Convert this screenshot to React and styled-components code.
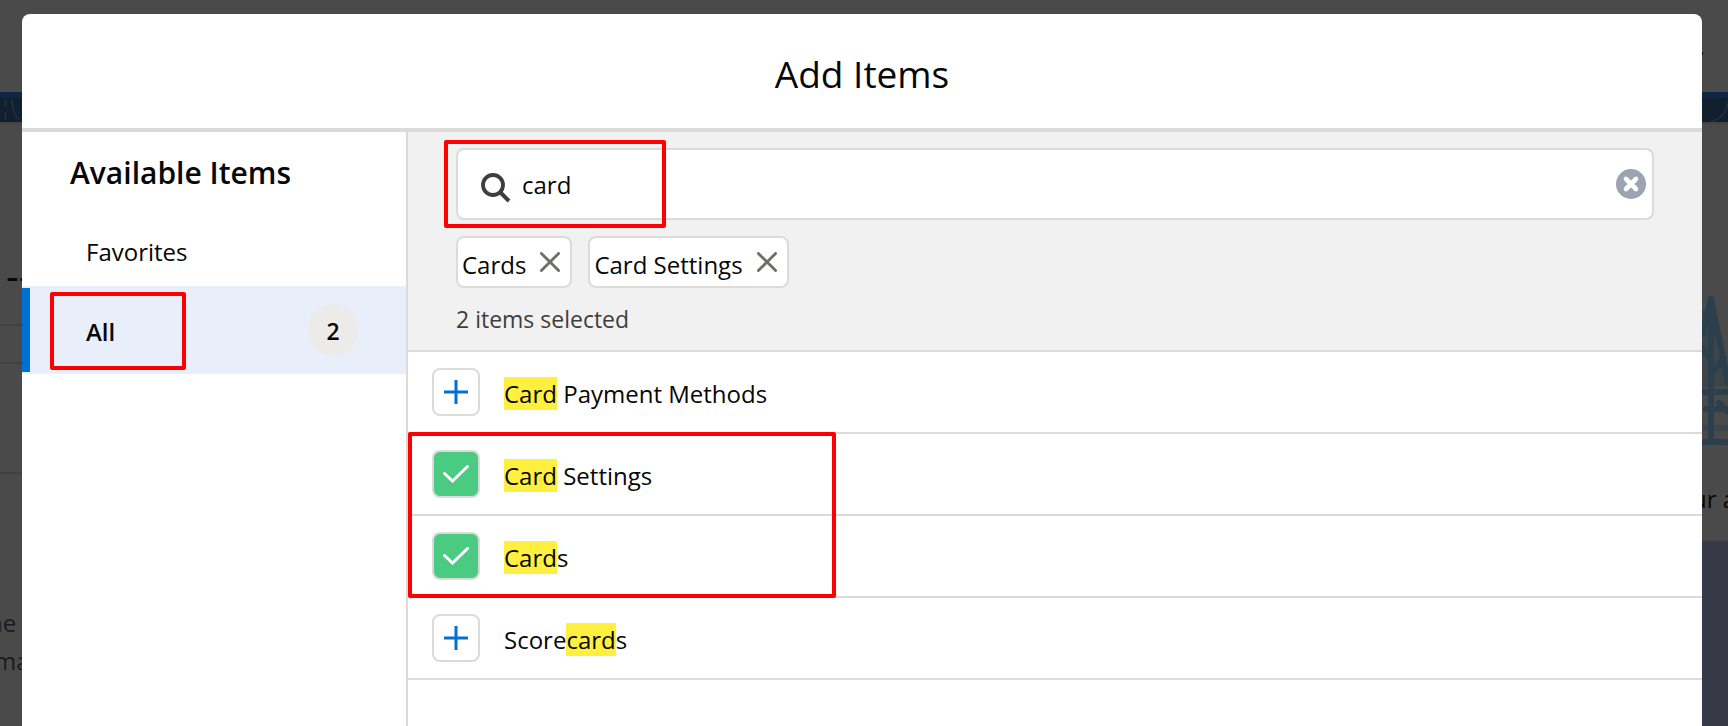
import React, { useState } from 'react'
import styled, { createGlobalStyle } from 'styled-components'

const COLORS = {
  BORDER: '#dddbda',
  BG_GRAY: '#f1f1f1',
  BRAND: '#0070d2',
  SELECTED: '#e8eefa',
  SUCCESS: '#4bca81',
  HIGHLIGHT: '#fff03f',
  ICON: '#706e6b',
  MARKER: '#ff0000',
  TEXT: '#080707'
}

const GlobalStyle = createGlobalStyle`
  * {
    box-sizing: border-box;
  }

  body {
    margin: 0;
    overflow: hidden;
    background: #4a4a4a;
    color: ${COLORS.TEXT};
    font-family: "Open Sans", "Noto Sans", sans-serif;
    font-size: 24px;
    line-height: 34px;
  }

  button, input {
    font: inherit;
    color: inherit;
  }
`

const Page = styled.div`
  position: relative;
  height: 100vh;
  overflow: hidden;
`

const Backdrop = styled.div`
  height: 100%;
  display: flex;
  flex-direction: column;
`

const TopBar = styled.div`
  height: 92px;
  display: flex;
  justify-content: flex-end;
  align-items: center;
  padding: 14px 25px 0 0;
`

const Dot = styled.span`
  width: 3px;
  height: 3px;
  background: #080808;
`

const Banner = styled.div`
  height: 32px;
  border-top: 6px solid #0f2647;
  border-bottom: 2px solid #434343;
  background: #11202f;
  display: flex;
  justify-content: space-between;
`

const Columns = styled.div`
  flex: 1;
  display: flex;
  justify-content: space-between;
`

const BackColumn = styled.div`
  width: 26px;
  overflow: hidden;
`

const BackBlock = styled.div`
  height: ${props => props.$height}px;
  border-bottom: 2px solid #414141;
  display: flex;
  flex-direction: column;
  justify-content: flex-end;
  color: #080808;
  white-space: nowrap;
`

const Dashes = styled.div`
  height: 66px;
  padding-left: 6px;
  font-size: 40px;
`

const BackText = styled.p`
  margin: 0;
  padding-top: 130px;
  display: flex;
  flex-direction: column;
  align-items: flex-start;
  line-height: 38px;
  color: #1d1b1b;
`

const BackWord = styled.span`
  margin-left: -${props => props.$cut}px;
`

const BackCaption = styled.div`
  height: 58px;
  margin: 34px 0 0 -10px;
`

const BackPanel = styled.div`
  height: 100%;
  background: #373a46;
`

const Modal = styled.section`
  position: absolute;
  top: 14px;
  right: 26px;
  bottom: 0;
  left: 22px;
  display: flex;
  flex-direction: column;
  background: #fff;
  border-radius: 8px 8px 0 0;
`

const ModalHeader = styled.header`
  padding: 36px 0 30px;
  border-bottom: 4px solid ${COLORS.BORDER};
  text-align: center;
`

const Title = styled.h1`
  margin: 0;
  font-size: 37px;
  font-weight: 400;
  line-height: 48px;
`

const ModalBody = styled.div`
  flex: 1;
  display: flex;
`

const Sidebar = styled.nav`
  width: 386px;
  flex: none;
  border-right: 2px solid ${COLORS.BORDER};
`

const SidebarHeading = styled.h2`
  margin: 0;
  padding: 21px 48px;
  font-size: 30px;
  font-weight: 600;
  line-height: 40px;
`

const NavItem = styled.a`
  position: relative;
  display: flex;
  align-items: center;
  justify-content: space-between;
  height: ${props => (props.$active ? 88 : 72)}px;
  padding: 2px 48px 2px 64px;
  border: 2px none ${COLORS.SELECTED};
  border-width: 2px 0;
  border-style: ${props => (props.$active ? 'solid' : 'none')};
  background: ${props => (props.$active ? COLORS.SELECTED : 'none')};
  box-shadow: ${props => (props.$active ? `inset 8px 0 ${COLORS.BRAND}` : 'none')};
  color: inherit;
  font-weight: ${props => (props.$active ? 600 : 400)};
  text-decoration: none;
`

const NavLabel = styled.span`
  padding-top: 3px;
`

const Badge = styled.span`
  width: 50px;
  height: 52px;
  border-radius: 25px;
  background: #ecebea;
  font-size: 23px;
  line-height: 54px;
  text-align: center;
`

const Main = styled.div`
  position: relative;
  flex: 1;
`

const SearchArea = styled.div`
  padding: 16px 48px 14px;
  height: 220px;
  background: ${COLORS.BG_GRAY};
  border-bottom: 2px solid ${COLORS.BORDER};
`

const SearchBox = styled.label`
  height: 72px;
  display: flex;
  align-items: center;
  gap: 11px;
  padding: 0 6px 0 23px;
  border: 2px solid ${COLORS.BORDER};
  border-radius: 8px;
  background: #fff;
`

const SearchInput = styled.input`
  flex: 1;
  min-width: 0;
  height: 40px;
  padding: 0;
  border: none;
  outline: none;
  background: none;
`

const ClearButton = styled.button`
  display: flex;
  padding: 0;
  border: none;
  background: none;
`

const Chips = styled.div`
  display: flex;
  gap: 16px;
  margin-top: 16px;
`

const Chip = styled.span`
  height: 52px;
  display: flex;
  align-items: center;
  gap: 14px;
  padding: 5px 10px 0 4px;
  border: 2px solid ${COLORS.BORDER};
  border-radius: 8px;
  background: #fff;
`

const ChipButton = styled.button`
  display: flex;
  padding: 0 0 6px;
  border: none;
  background: none;
`

const SelectedCount = styled.p`
  margin: 14px 0 0;
  color: #3e3e3c;
  font-size: 23px;
`

const ItemList = styled.ul`
  margin: 0;
  padding: 0;
  list-style: none;
`

const ItemRow = styled.li`
  height: 82px;
  display: flex;
  align-items: center;
  gap: 24px;
  padding-left: 24px;
  border-bottom: 2px solid ${COLORS.BORDER};
`

const ItemButton = styled.button`
  width: 48px;
  height: 48px;
  display: flex;
  align-items: center;
  justify-content: center;
  padding: 0;
  border: 2px solid ${COLORS.BORDER};
  border-radius: 8px;
  background: ${props => (props.$added ? COLORS.SUCCESS : '#fff')};
  color: ${props => (props.$added ? '#fff' : COLORS.BRAND)};
`

const ItemName = styled.span`
  padding-top: 4px;
`

const Highlight = styled.mark`
  background: ${COLORS.HIGHLIGHT};
  color: inherit;
`

const Marker = styled.div`
  position: absolute;
  top: ${props => props.$top}px;
  left: ${props => props.$left}px;
  width: ${props => props.$width}px;
  height: ${props => props.$height}px;
  border: 4px solid ${COLORS.MARKER};
  border-radius: 2px;
  pointer-events: none;
`

const ITEMS = ['Card Payment Methods', 'Card Settings', 'Cards', 'Scorecards']

const SearchIcon = () => (
  <svg width="30" height="38" viewBox="0 -8 30 38" fill="none" stroke="#3e3e3c" aria-hidden="true">
    <circle cx="12" cy="12" r="10" strokeWidth="3.8" />
    <path d="M19.5 19.5l8.5 8.5" strokeWidth="4" />
  </svg>
)

const ClearIcon = () => (
  <svg width="30" height="30" viewBox="0 0 30 30" aria-hidden="true">
    <circle cx="15" cy="15" r="15" fill="#9ca4b1" />
    <path d="M10 10l10 10M20 10l-10 10" stroke="#fff" strokeWidth="4.6" strokeLinecap="round" />
  </svg>
)

const CloseIcon = () => (
  <svg width="20" height="20" viewBox="0 0 20 20" aria-hidden="true">
    <path d="M1.4 1.4l17.2 17.2M18.6 1.4L1.4 18.6" stroke={COLORS.ICON} strokeWidth="2.8" strokeLinecap="round" />
  </svg>
)

const PlusIcon = () => (
  <svg width="24" height="24" viewBox="0 0 24 24" aria-hidden="true">
    <path d="M12 0v24M0 12h24" stroke="currentColor" strokeWidth="3" />
  </svg>
)

const CheckIcon = () => (
  <svg width="26" height="18" viewBox="0 0 26 18" fill="none" aria-hidden="true">
    <path d="M1.5 8.5l8 7.5L24.5 1.5" stroke="currentColor" strokeWidth="3" strokeLinecap="round" />
  </svg>
)

const BannerLeft = () => (
  <svg width="22" height="24" viewBox="0 0 22 24" fill="none" stroke="#24323f" aria-hidden="true">
    <path d="M5.5 2v6M5.5 14v8M12 2q1 15 7 20" strokeWidth="1.5" />
  </svg>
)

const BannerRight = () => (
  <svg width="26" height="24" viewBox="0 0 26 24" fill="none" stroke="#24323f" aria-hidden="true">
    <path d="M26 4q-2 15-17 20" strokeWidth="1.5" />
  </svg>
)

const Trees = () => (
  <svg width="26" height="152" viewBox="0 0 26 152" fill="none" stroke="#2b3f4c" aria-hidden="true">
    <path d="M0 91V35L9 4l16 87z" fill="#3c4649" stroke="none" />
    <path d="M0 132h26" strokeWidth="6" stroke="#3b464b" />
    <path d="M0 15l3 3" strokeWidth="5" stroke="#35434a" />
    <path d="M0 96h26M0 146h26" strokeWidth="6" />
    <path d="M9 3v143" strokeWidth="6" strokeLinecap="round" />
    <path d="M9 3L0 38M9 3l17 84M0 52l9 11M9 78l13-16M4 113h22M17 107l9 9" strokeWidth="6" strokeLinecap="round" />
  </svg>
)

const BackgroundPage = () => (
  <Backdrop aria-hidden="true">
    <TopBar><Dot /></TopBar>
    <Banner>
      <BannerLeft />
      <BannerRight />
    </Banner>
    <Columns>
      <BackColumn>
        <BackBlock $height={202}>
          <Dashes>--</Dashes>
        </BackBlock>
        <BackBlock $height={38} />
        <BackBlock $height={110} />
        <BackText>
          <BackWord $cut={12}>ne</BackWord>
          <BackWord $cut={6}>ma</BackWord>
        </BackText>
      </BackColumn>
      <BackColumn>
        <BackBlock $height={418}>
          <Trees />
          <BackCaption>ur a</BackCaption>
        </BackBlock>
        <BackPanel />
      </BackColumn>
    </Columns>
  </Backdrop>
)

const ItemLabel = ({ name, term }) => {
  const start = term ? name.toLowerCase().indexOf(term.toLowerCase()) : -1

  if (start < 0) {
    return <ItemName>{name}</ItemName>
  }

  const end = start + term.length

  return (
    <ItemName>
      {name.slice(0, start)}
      <Highlight>{name.slice(start, end)}</Highlight>
      {name.slice(end)}
    </ItemName>
  )
}

const App = () => {
  const [term, setTerm] = useState('card')
  const [selected, setSelected] = useState(['Cards', 'Card Settings'])

  const toggle = name => {
    setSelected(selected.includes(name)
      ? selected.filter(item => item !== name)
      : [...selected, name])
  }

  const items = ITEMS.filter(name => name.toLowerCase().includes(term.toLowerCase()))

  return (
    <Page>
      <GlobalStyle />
      <BackgroundPage />
      <Modal role="dialog" aria-labelledby="modal-title">
        <ModalHeader>
          <Title id="modal-title">Add Items</Title>
        </ModalHeader>
        <ModalBody>
          <Sidebar>
            <SidebarHeading>Available Items</SidebarHeading>
            <NavItem href="#favorites">
              <NavLabel>Favorites</NavLabel>
            </NavItem>
            <NavItem href="#all" $active>
              <NavLabel>All</NavLabel>
              <Badge>{selected.length}</Badge>
              <Marker $top={4} $left={28} $width={136} $height={78} />
            </NavItem>
          </Sidebar>
          <Main>
            <SearchArea>
              <SearchBox>
                <SearchIcon />
                <SearchInput
                  type="text"
                  aria-label="Search items"
                  value={term}
                  onChange={event => setTerm(event.target.value)}
                />
                <ClearButton type="button" aria-label="Clear" onClick={() => setTerm('')}>
                  <ClearIcon />
                </ClearButton>
              </SearchBox>
              <Chips>
                {selected.map(name => (
                  <Chip key={name}>
                    {name}
                    <ChipButton type="button" aria-label={`Remove ${name}`} onClick={() => toggle(name)}>
                      <CloseIcon />
                    </ChipButton>
                  </Chip>
                ))}
              </Chips>
              <SelectedCount>{selected.length} items selected</SelectedCount>
            </SearchArea>
            <ItemList>
              {items.map(name => {
                const added = selected.includes(name)

                return (
                  <ItemRow key={name}>
                    <ItemButton
                      type="button"
                      $added={added}
                      aria-pressed={added}
                      aria-label={`Add ${name}`}
                      onClick={() => toggle(name)}
                    >
                      {added ? <CheckIcon /> : <PlusIcon />}
                    </ItemButton>
                    <ItemLabel name={name} term={term} />
                  </ItemRow>
                )
              })}
            </ItemList>
            <Marker $top={8} $left={36} $width={222} $height={88} />
            <Marker $top={300} $left={0} $width={428} $height={166} />
          </Main>
        </ModalBody>
      </Modal>
    </Page>
  )
}

export default App
